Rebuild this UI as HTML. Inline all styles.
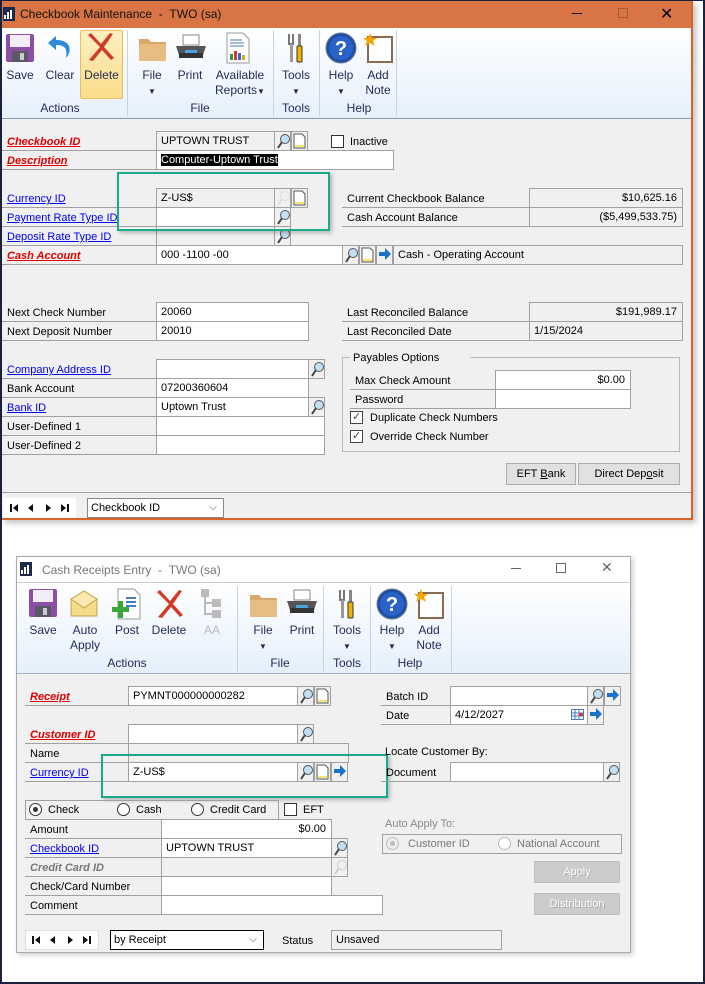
<!DOCTYPE html>
<html><head><meta charset="utf-8">
<style>
*{box-sizing:border-box;margin:0;padding:0}
body{width:705px;height:984px;position:relative;background:#fff;font-family:"Liberation Sans",Arial,sans-serif;font-size:11px;color:#000;overflow:hidden}
.a{position:absolute}
.f{position:absolute;border:1px solid #a0a0a0;background:#fff;height:20px;padding-left:4px;line-height:18px;white-space:nowrap}
.g{background:#f0f0f0}
.r{text-align:right;padding-right:5px}
.l{position:absolute;border-bottom:1px solid #a0a0a0;height:19px;line-height:21px;padding-left:5px;white-space:nowrap}
.lk{color:#0000ee;text-decoration:underline}
.rq{color:#e00000;font-weight:bold;font-style:italic;text-decoration:underline}
.ib{position:absolute;width:17px;height:20px;border:1px solid #a0a0a0;background:#f0f0f0}
.ib svg{position:absolute;left:1px;top:1px}
.rb{position:absolute;text-align:center;color:#1e2a55;font-size:12px;line-height:15px}
.sep{position:absolute;width:1px;background:#c8d3e0}
.btn{position:absolute;border:1px solid #adadad;background:#e1e1e1;text-align:center;line-height:20px}
.cb{position:absolute;width:13px;height:13px;border:1px solid #333;background:#fff}
.rd{position:absolute;width:13px;height:13px;border:1px solid #333;border-radius:50%;background:#fff}
.nav{position:absolute;background:#fff}
</style></head><body>
<div class="a" style="left:0;top:0;width:705px;height:984px;border-left:2px solid #1a2240;border-right:2px solid #1a2240;border-bottom:2px solid #1a2240;border-top:1px solid #1a2240"></div>

<!-- ============ TOP WINDOW ============ -->
<div class="a" style="left:2px;top:1px;width:691px;height:519px;background:#f0f0f0;border-right:2px solid #d9622b;border-bottom:2px solid #d9622b;box-shadow:3px 3px 6px rgba(0,0,0,.25)"></div>
<div class="a" style="left:2px;top:1px;width:689px;height:27px;background:#d97444"></div>
<svg class="a" style="left:3px;top:7px" width="12" height="14"><rect x="0" y="0" width="12" height="14" fill="#1b2a4a"/><path d="M2 12V8M5 12V5M8 12V3" stroke="#fff" stroke-width="2"/></svg>
<div class="a" style="left:20px;top:7px;font-size:12px;color:#111">Checkbook Maintenance&nbsp; - &nbsp;TWO (sa)</div>
<div class="a" style="left:572px;top:13px;width:10px;height:1px;background:#000"></div>
<div class="a" style="left:618px;top:8px;width:10px;height:10px;border:1px solid #a85a35"></div>
<div class="a" style="left:660px;top:4px;font-size:16px;color:#000">✕</div>
<div class="a" style="left:2px;top:28px;width:689px;height:91px;background:linear-gradient(#fff,#e5f0fc);border-bottom:1px solid #8a98a8"></div>
<div class="a" style="left:80px;top:30px;width:43px;height:69px;background:linear-gradient(#fdf0c0,#fbdc8c);border:1px solid #e8c060;border-radius:2px"></div>
<svg class="a" style="left:5px;top:33px" width="30" height="30"><rect x="1" y="1" width="28" height="28" rx="2" fill="#8d4ea6"/><rect x="5" y="2" width="20" height="12" fill="#f2eef7"/><rect x="7" y="18" width="16" height="11" fill="#5a5a66"/><rect x="15" y="20" width="4" height="7" fill="#ccc"/></svg>
<svg class="a" style="left:46px;top:32px" width="28" height="32"><path d="M10 4 L2 11 L10 18 L10 13 C18 13 22 16 20 26 C26 20 26 8 10 8Z" fill="#2d8ad8"/></svg>
<svg class="a" style="left:85px;top:31px" width="30" height="32"><path d="M3 4 L15 16 L4 29 L8 30 L17 19 L26 29 L29 27 L19 16 L28 3 L25 2 L16 13 L6 2Z" fill="#d23a2a"/></svg>
<svg class="a" style="left:138px;top:36px" width="30" height="26"><path d="M1 3h9l3 3h15v19H1z" fill="#d9a96b"/><rect x="1" y="8" width="27" height="17" fill="#e6bd82"/></svg>
<svg class="a" style="left:174px;top:33px" width="34" height="30"><rect x="9" y="2" width="16" height="10" fill="#fff" stroke="#888"/><path d="M2 13h30l-3 9H5z" fill="#555"/><rect x="5" y="20" width="24" height="5" fill="#333"/><rect x="11" y="17" width="12" height="3" fill="#4aa3e0"/></svg>
<svg class="a" style="left:225px;top:32px" width="26" height="32"><path d="M2 1h16l6 6v24H2z" fill="#fff" stroke="#999"/><path d="M5 8h12M5 11h14M5 14h14" stroke="#4a7ac0"/><rect x="5" y="22" width="3" height="6" fill="#2a9a3a"/><rect x="9" y="19" width="3" height="9" fill="#d33"/><rect x="13" y="21" width="3" height="7" fill="#2a6ad0"/><rect x="17" y="23" width="3" height="5" fill="#e8a020"/></svg>
<svg class="a" style="left:285px;top:32px" width="22" height="32"><path d="M4 2v10h4V2" fill="none" stroke="#777" stroke-width="2"/><rect x="5" y="12" width="3" height="18" fill="#999"/><rect x="13" y="2" width="3" height="12" fill="#888"/><rect x="12" y="14" width="5" height="16" rx="1" fill="#f0b400" stroke="#333"/></svg>
<svg class="a" style="left:325px;top:32px" width="32" height="32"><circle cx="16" cy="16" r="15" fill="#1e4fa8" stroke="#6b7a90"/><circle cx="16" cy="16" r="12" fill="#2a62c8"/><text x="16" y="23" font-size="20" font-weight="bold" fill="#fff" text-anchor="middle" font-family="Liberation Sans">?</text></svg>
<svg class="a" style="left:362px;top:32px" width="32" height="32"><rect x="6" y="5" width="24" height="25" fill="#fff" stroke="#8a6a50" stroke-width="2"/><path d="M8 1l2 5 5 0-4 3 2 5-5-3-5 3 2-5-4-3 5 0z" fill="#f5a400"/></svg>
<div class="rb" style="left:2px;top:68px;width:36px">Save</div>
<div class="rb" style="left:42px;top:68px;width:36px">Clear</div>
<div class="rb" style="left:80px;top:68px;width:43px">Delete</div>
<div class="rb" style="left:132px;top:68px;width:40px">File<br><span style="font-size:8px">▼</span></div>
<div class="rb" style="left:172px;top:68px;width:36px">Print</div>
<div class="rb" style="left:211px;top:68px;width:58px">Available<br>Reports<span style="font-size:8px">▼</span></div>
<div class="rb" style="left:276px;top:68px;width:40px">Tools<br><span style="font-size:8px">▼</span></div>
<div class="rb" style="left:323px;top:68px;width:36px">Help<br><span style="font-size:8px">▼</span></div>
<div class="rb" style="left:360px;top:68px;width:36px">Add<br>Note</div>
<div class="rb" style="left:20px;top:101px;width:80px">Actions</div>
<div class="rb" style="left:160px;top:101px;width:80px">File</div>
<div class="rb" style="left:276px;top:101px;width:40px">Tools</div>
<div class="rb" style="left:323px;top:101px;width:72px">Help</div>
<div class="sep" style="left:127px;top:30px;height:86px"></div>
<div class="sep" style="left:273px;top:30px;height:86px"></div>
<div class="sep" style="left:319px;top:30px;height:86px"></div>
<div class="sep" style="left:396px;top:30px;height:86px"></div>

<div class="l rq" style="left:2px;top:132px;width:154px">Checkbook ID</div>
<div class="f g" style="left:156px;top:131px;width:119px">UPTOWN TRUST</div>
<div class="ib" style="left:274px;top:131px"><svg width="15" height="17"><circle cx="9" cy="6" r="4.5" fill="#bfe0f5" stroke="#555"/><line x1="6" y1="9" x2="2" y2="15" stroke="#444" stroke-width="2"/></svg></div>
<div class="ib" style="left:291px;top:131px"><svg width="13" height="16"><path d="M1 1h8l3 3v11H1z" fill="#fff" stroke="#555"/><path d="M2 12h9v2H2z" fill="#f5e36b"/></svg></div>
<div class="cb" style="left:331px;top:135px"></div>
<div class="a" style="left:350px;top:136px">Inactive</div>
<div class="l rq" style="left:2px;top:151px;width:154px">Description</div>
<div class="f" style="left:156px;top:150px;width:238px"><span style="background:#000;color:#fff">Computer-Uptown Trust</span></div>

<div class="l lk" style="left:2px;top:189px;width:154px;color:#0000ee">Currency ID</div>
<div class="f g" style="left:156px;top:188px;width:119px">Z-US$</div>
<div class="ib" style="left:274px;top:188px"><svg width="15" height="17"><circle cx="9" cy="6" r="4.5" fill="none" stroke="#ddd"/><line x1="6" y1="9" x2="2" y2="15" stroke="#ddd" stroke-width="2"/></svg></div>
<div class="ib" style="left:291px;top:188px"><svg width="13" height="16"><path d="M1 1h8l3 3v11H1z" fill="#fff" stroke="#555"/><path d="M2 12h9v2H2z" fill="#f5e36b"/></svg></div>
<div class="l lk" style="left:2px;top:208px;width:154px">Payment Rate Type ID</div>
<div class="f" style="left:156px;top:207px;width:119px"></div>
<div class="ib" style="left:274px;top:207px"><svg width="15" height="17"><circle cx="9" cy="6" r="4.5" fill="#bfe0f5" stroke="#555"/><line x1="6" y1="9" x2="2" y2="15" stroke="#444" stroke-width="2"/></svg></div>
<div class="l lk" style="left:2px;top:227px;width:154px">Deposit Rate Type ID</div>
<div class="f g" style="left:156px;top:226px;width:119px"></div>
<div class="ib" style="left:274px;top:226px"><svg width="15" height="17"><circle cx="9" cy="6" r="4.5" fill="#bfe0f5" stroke="#555"/><line x1="6" y1="9" x2="2" y2="15" stroke="#444" stroke-width="2"/></svg></div>
<div class="l rq" style="left:2px;top:246px;width:154px">Cash Account</div>
<div class="f" style="left:156px;top:245px;width:187px">000 -1100 -00</div>
<div class="ib" style="left:342px;top:245px"><svg width="15" height="17"><circle cx="9" cy="6" r="4.5" fill="#bfe0f5" stroke="#555"/><line x1="6" y1="9" x2="2" y2="15" stroke="#444" stroke-width="2"/></svg></div>
<div class="ib" style="left:359px;top:245px"><svg width="13" height="16"><path d="M1 1h8l3 3v11H1z" fill="#fff" stroke="#555"/><path d="M2 12h9v2H2z" fill="#f5e36b"/></svg></div>
<div class="ib" style="left:376px;top:245px"><svg width="14" height="14"><path d="M1 5h6V1l6 6-6 6V9H1z" fill="#1a73c8"/></svg></div>
<div class="f g" style="left:393px;top:245px;width:290px">Cash - Operating Account</div>

<div class="l" style="left:342px;top:189px;width:188px">Current Checkbook Balance</div>
<div class="f g r" style="left:529px;top:188px;width:154px">$10,625.16</div>
<div class="l" style="left:342px;top:208px;width:188px">Cash Account Balance</div>
<div class="f g r" style="left:529px;top:207px;width:154px">($5,499,533.75)</div>

<div class="a" style="left:117px;top:172px;width:213px;height:59px;border:2px solid #1aa98a;box-shadow:2px 2px 4px rgba(0,0,0,.25)"></div>

<div class="l" style="left:2px;top:303px;width:154px">Next Check Number</div>
<div class="f" style="left:156px;top:302px;width:153px">20060</div>
<div class="l" style="left:2px;top:322px;width:154px">Next Deposit Number</div>
<div class="f" style="left:156px;top:321px;width:153px">20010</div>
<div class="l" style="left:342px;top:303px;width:188px">Last Reconciled Balance</div>
<div class="f g r" style="left:529px;top:302px;width:154px">$191,989.17</div>
<div class="l" style="left:342px;top:322px;width:188px">Last Reconciled Date</div>
<div class="f g" style="left:529px;top:321px;width:154px">1/15/2024</div>

<div class="l lk" style="left:2px;top:360px;width:154px">Company Address ID</div>
<div class="f" style="left:156px;top:359px;width:153px"></div>
<div class="ib" style="left:308px;top:359px"><svg width="15" height="17"><circle cx="9" cy="6" r="4.5" fill="#bfe0f5" stroke="#555"/><line x1="6" y1="9" x2="2" y2="15" stroke="#444" stroke-width="2"/></svg></div>
<div class="l" style="left:2px;top:379px;width:154px">Bank Account</div>
<div class="f" style="left:156px;top:378px;width:153px">07200360604</div>
<div class="l lk" style="left:2px;top:398px;width:154px">Bank ID</div>
<div class="f" style="left:156px;top:397px;width:153px">Uptown Trust</div>
<div class="ib" style="left:308px;top:397px"><svg width="15" height="17"><circle cx="9" cy="6" r="4.5" fill="#bfe0f5" stroke="#555"/><line x1="6" y1="9" x2="2" y2="15" stroke="#444" stroke-width="2"/></svg></div>
<div class="l" style="left:2px;top:417px;width:154px">User-Defined 1</div>
<div class="f" style="left:156px;top:416px;width:169px"></div>
<div class="l" style="left:2px;top:436px;width:154px">User-Defined 2</div>
<div class="f" style="left:156px;top:435px;width:169px"></div>

<div class="a" style="left:342px;top:357px;width:338px;height:95px;border:1px solid #b8b8b8"></div>
<div class="a" style="left:350px;top:352px;background:#f0f0f0;padding:0 3px;width:120px">Payables Options</div>
<div class="l" style="left:350px;top:371px;width:146px">Max Check Amount</div>
<div class="f r" style="left:495px;top:370px;width:136px">$0.00</div>
<div class="l" style="left:350px;top:390px;width:146px">Password</div>
<div class="f" style="left:495px;top:389px;width:136px"></div>
<div class="cb" style="left:350px;top:411px;border-color:#444"><span style="position:absolute;left:1px;top:-2px;font-size:11px;color:#444">✓</span></div>
<div class="a" style="left:370px;top:412px">Duplicate Check Numbers</div>
<div class="cb" style="left:350px;top:430px;border-color:#444"><span style="position:absolute;left:1px;top:-2px;font-size:11px;color:#444">✓</span></div>
<div class="a" style="left:370px;top:431px">Override Check Number</div>
<div class="btn" style="left:506px;top:463px;width:70px;height:22px">EFT <u>B</u>ank</div>
<div class="btn" style="left:578px;top:463px;width:102px;height:22px">Direct Dep<u>o</u>sit</div>

<div class="a" style="left:2px;top:492px;width:689px;height:1px;background:#a0a0a0"></div>
<svg class="nav" style="left:3px;top:498px" width="73" height="20"><rect width="73" height="20" fill="#fff"/><g fill="#111"><rect x="7" y="6" width="2" height="8"/><path d="M15 6v8l-5-4z"/><path d="M30 6v8l-5-4z"/><path d="M43 6v8l5-4z"/><path d="M58 6v8l5-4z"/><rect x="64" y="6" width="2" height="8"/></g></svg>
<div class="a" style="left:87px;top:498px;width:137px;height:20px;border:1px solid #888;background:#fff;padding-left:3px;line-height:18px">Checkbook ID<span style="position:absolute;right:6px;top:0;font-size:10px;color:#555">⌵</span></div>

<!-- ============ SECOND WINDOW ============ -->
<div class="a" style="left:16px;top:556px;width:615px;height:397px;background:#f0f0f0;border:1px solid #aaa;box-shadow:2px 2px 5px rgba(0,0,0,.2)"></div>
<div class="a" style="left:17px;top:557px;width:613px;height:26px;background:#fff;border-bottom:1px solid #ccc"></div>
<svg class="a" style="left:20px;top:562px" width="12" height="14"><rect x="0" y="0" width="12" height="14" fill="#1b2a4a"/><path d="M2 12V8M5 12V5M8 12V3" stroke="#fff" stroke-width="2"/></svg>
<div class="a" style="left:42px;top:563px;font-size:12px;color:#777">Cash Receipts Entry&nbsp; - &nbsp;TWO (sa)</div>
<div class="a" style="left:511px;top:568px;width:10px;height:1px;background:#666"></div>
<div class="a" style="left:556px;top:563px;width:10px;height:10px;border:1px solid #666"></div>
<div class="a" style="left:601px;top:559px;font-size:14px;color:#666">✕</div>
<div class="a" style="left:17px;top:583px;width:613px;height:91px;background:linear-gradient(#fff,#e5f0fc);border-bottom:1px solid #a9b3c0"></div>
<svg class="a" style="left:28px;top:588px" width="30" height="30"><rect x="1" y="1" width="28" height="28" rx="2" fill="#8d4ea6"/><rect x="5" y="2" width="20" height="12" fill="#f2eef7"/><rect x="7" y="18" width="16" height="11" fill="#5a5a66"/><rect x="15" y="20" width="4" height="7" fill="#ccc"/></svg>
<svg class="a" style="left:69px;top:590px" width="30" height="28"><rect x="2" y="9" width="26" height="17" fill="#f5dc8a" stroke="#c9a24a"/><path d="M2 9L15 1L28 9L15 18Z" fill="#fbe9b0" stroke="#c9a24a"/></svg>
<svg class="a" style="left:112px;top:588px" width="30" height="32"><path d="M6 1h16l6 6v24H6z" fill="#fff" stroke="#999"/><path d="M14 10h10M14 14h10M14 18h10" stroke="#4a7ac0" stroke-width="2"/><path d="M6 13h5v6h6v5h-6v6H6v-6H0v-5h6z" fill="#3aa83a"/></svg>
<svg class="a" style="left:154px;top:588px" width="30" height="32"><path d="M3 4 L15 16 L4 29 L8 30 L17 19 L26 29 L29 27 L19 16 L28 3 L25 2 L16 13 L6 2Z" fill="#d23a2a"/></svg>
<svg class="a" style="left:200px;top:588px" width="24" height="32"><rect x="1" y="1" width="8" height="8" fill="#bbb"/><rect x="12" y="11" width="9" height="8" fill="#bbb"/><rect x="12" y="22" width="9" height="8" fill="#bbb"/><path d="M5 9v17h7M5 15h7" stroke="#bbb" stroke-width="2" fill="none"/></svg>
<svg class="a" style="left:249px;top:592px" width="30" height="26"><path d="M1 3h9l3 3h15v19H1z" fill="#d9a96b"/><rect x="1" y="8" width="27" height="17" fill="#e6bd82"/></svg>
<svg class="a" style="left:285px;top:588px" width="34" height="30"><rect x="9" y="2" width="16" height="10" fill="#fff" stroke="#888"/><path d="M2 13h30l-3 9H5z" fill="#555"/><rect x="5" y="20" width="24" height="5" fill="#333"/><rect x="11" y="17" width="12" height="3" fill="#4aa3e0"/></svg>
<svg class="a" style="left:336px;top:588px" width="22" height="32"><path d="M4 2v10h4V2" fill="none" stroke="#777" stroke-width="2"/><rect x="5" y="12" width="3" height="18" fill="#999"/><rect x="13" y="2" width="3" height="12" fill="#888"/><rect x="12" y="14" width="5" height="16" rx="1" fill="#f0b400" stroke="#333"/></svg>
<svg class="a" style="left:376px;top:588px" width="32" height="32"><circle cx="16" cy="16" r="15" fill="#1e4fa8" stroke="#6b7a90"/><circle cx="16" cy="16" r="12" fill="#2a62c8"/><text x="16" y="23" font-size="20" font-weight="bold" fill="#fff" text-anchor="middle" font-family="Liberation Sans">?</text></svg>
<svg class="a" style="left:413px;top:588px" width="32" height="32"><rect x="6" y="5" width="24" height="25" fill="#fff" stroke="#8a6a50" stroke-width="2"/><path d="M8 1l2 5 5 0-4 3 2 5-5-3-5 3 2-5-4-3 5 0z" fill="#f5a400"/></svg>
<div class="rb" style="left:25px;top:623px;width:36px">Save</div>
<div class="rb" style="left:67px;top:623px;width:36px">Auto<br>Apply</div>
<div class="rb" style="left:109px;top:623px;width:36px">Post</div>
<div class="rb" style="left:148px;top:623px;width:42px">Delete</div>
<div class="rb" style="left:196px;top:623px;width:32px;color:#bbb">AA</div>
<div class="rb" style="left:245px;top:623px;width:36px">File<br><span style="font-size:8px">▼</span></div>
<div class="rb" style="left:284px;top:623px;width:36px">Print</div>
<div class="rb" style="left:329px;top:623px;width:36px">Tools<br><span style="font-size:8px">▼</span></div>
<div class="rb" style="left:374px;top:623px;width:36px">Help<br><span style="font-size:8px">▼</span></div>
<div class="rb" style="left:411px;top:623px;width:36px">Add<br>Note</div>
<div class="rb" style="left:87px;top:656px;width:80px">Actions</div>
<div class="rb" style="left:260px;top:656px;width:40px">File</div>
<div class="rb" style="left:329px;top:656px;width:36px">Tools</div>
<div class="rb" style="left:390px;top:656px;width:40px">Help</div>
<div class="sep" style="left:237px;top:586px;height:86px"></div>
<div class="sep" style="left:323px;top:586px;height:86px"></div>
<div class="sep" style="left:370px;top:586px;height:86px"></div>
<div class="sep" style="left:451px;top:586px;height:86px"></div>

<div class="l rq" style="left:25px;top:687px;width:103px">Receipt</div>
<div class="f" style="left:128px;top:686px;width:170px">PYMNT000000000282</div>
<div class="ib" style="left:297px;top:686px"><svg width="15" height="17"><circle cx="9" cy="6" r="4.5" fill="#bfe0f5" stroke="#555"/><line x1="6" y1="9" x2="2" y2="15" stroke="#444" stroke-width="2"/></svg></div>
<div class="ib" style="left:314px;top:686px"><svg width="13" height="16"><path d="M1 1h8l3 3v11H1z" fill="#fff" stroke="#555"/><path d="M2 12h9v2H2z" fill="#f5e36b"/></svg></div>
<div class="l rq" style="left:25px;top:725px;width:103px">Customer ID</div>
<div class="f" style="left:128px;top:724px;width:170px"></div>
<div class="ib" style="left:297px;top:724px"><svg width="15" height="17"><circle cx="9" cy="6" r="4.5" fill="#bfe0f5" stroke="#555"/><line x1="6" y1="9" x2="2" y2="15" stroke="#444" stroke-width="2"/></svg></div>
<div class="l" style="left:25px;top:744px;width:103px">Name</div>
<div class="f g" style="left:128px;top:743px;width:221px"></div>
<div class="l lk" style="left:25px;top:763px;width:103px">Currency ID</div>
<div class="f" style="left:128px;top:762px;width:170px">Z-US$</div>
<div class="ib" style="left:297px;top:762px"><svg width="15" height="17"><circle cx="9" cy="6" r="4.5" fill="#bfe0f5" stroke="#555"/><line x1="6" y1="9" x2="2" y2="15" stroke="#444" stroke-width="2"/></svg></div>
<div class="ib" style="left:314px;top:762px"><svg width="13" height="16"><path d="M1 1h8l3 3v11H1z" fill="#fff" stroke="#555"/><path d="M2 12h9v2H2z" fill="#f5e36b"/></svg></div>
<div class="ib" style="left:331px;top:762px;width:17px"><svg width="14" height="14"><path d="M1 5h6V1l6 6-6 6V9H1z" fill="#1a73c8"/></svg></div>

<div class="a" style="left:101px;top:754px;width:287px;height:44px;border:2px solid #1aa98a;box-shadow:2px 2px 4px rgba(0,0,0,.25)"></div>

<div class="l" style="left:381px;top:687px;width:70px">Batch ID</div>
<div class="f" style="left:450px;top:686px;width:138px"></div>
<div class="ib" style="left:587px;top:686px"><svg width="15" height="17"><circle cx="9" cy="6" r="4.5" fill="#bfe0f5" stroke="#555"/><line x1="6" y1="9" x2="2" y2="15" stroke="#444" stroke-width="2"/></svg></div>
<div class="ib" style="left:604px;top:686px"><svg width="14" height="14"><path d="M1 5h6V1l6 6-6 6V9H1z" fill="#1a73c8"/></svg></div>
<div class="l" style="left:381px;top:706px;width:70px">Date</div>
<div class="f" style="left:450px;top:705px;width:138px">4/12/2027<svg style="position:absolute;right:3px;top:3px" width="13" height="11"><rect x="0.5" y="0.5" width="12" height="10" fill="#fff" stroke="#4a7ac0"/><path d="M0 4h13M0 7h13M4 0v11M8 0v11" stroke="#4a7ac0"/><rect x="8" y="4" width="4" height="3" fill="#d33"/></svg></div>
<div class="ib" style="left:587px;top:705px"><svg width="14" height="14"><path d="M1 5h6V1l6 6-6 6V9H1z" fill="#1a73c8"/></svg></div>
<div class="a" style="left:385px;top:746px">Locate Customer By:</div>
<div class="l" style="left:381px;top:763px;width:70px">Document</div>
<div class="f" style="left:450px;top:762px;width:154px"></div>
<div class="ib" style="left:603px;top:762px"><svg width="15" height="17"><circle cx="9" cy="6" r="4.5" fill="#bfe0f5" stroke="#555"/><line x1="6" y1="9" x2="2" y2="15" stroke="#444" stroke-width="2"/></svg></div>

<div class="a" style="left:25px;top:800px;width:254px;height:20px;border:1px solid #a0a0a0"></div>
<div class="rd" style="left:29px;top:803px"><span style="position:absolute;left:3px;top:3px;width:5px;height:5px;border-radius:50%;background:#333"></span></div>
<div class="a" style="left:48px;top:804px">Check</div>
<div class="rd" style="left:117px;top:803px"></div>
<div class="a" style="left:136px;top:804px">Cash</div>
<div class="rd" style="left:191px;top:803px"></div>
<div class="a" style="left:210px;top:804px">Credit Card</div>
<div class="cb" style="left:284px;top:803px"></div>
<div class="a" style="left:303px;top:804px">EFT</div>

<div class="l" style="left:25px;top:820px;width:137px">Amount</div>
<div class="f r" style="left:161px;top:819px;width:171px">$0.00</div>
<div class="l lk" style="left:25px;top:839px;width:137px">Checkbook ID</div>
<div class="f" style="left:161px;top:838px;width:171px">UPTOWN TRUST</div>
<div class="ib" style="left:331px;top:838px"><svg width="15" height="17"><circle cx="9" cy="6" r="4.5" fill="#bfe0f5" stroke="#555"/><line x1="6" y1="9" x2="2" y2="15" stroke="#444" stroke-width="2"/></svg></div>
<div class="l" style="left:25px;top:858px;width:137px;color:#777;font-weight:bold;font-style:italic">Credit Card ID</div>
<div class="f g" style="left:161px;top:857px;width:171px"></div>
<div class="ib" style="left:331px;top:857px"><svg width="15" height="17"><circle cx="9" cy="6" r="4.5" fill="none" stroke="#ccc"/><line x1="6" y1="9" x2="2" y2="15" stroke="#ccc" stroke-width="2"/></svg></div>
<div class="l" style="left:25px;top:877px;width:137px">Check/Card Number</div>
<div class="f" style="left:161px;top:876px;width:171px"></div>
<div class="l" style="left:25px;top:896px;width:137px">Comment</div>
<div class="f" style="left:161px;top:895px;width:222px"></div>

<div class="a" style="left:385px;top:818px;color:#888">Auto Apply To:</div>
<div class="a" style="left:382px;top:834px;width:240px;height:20px;border:1px solid #a0a0a0"></div>
<div class="rd" style="left:386px;top:837px;border-color:#bbb;background:#eee"><span style="position:absolute;left:3px;top:3px;width:5px;height:5px;border-radius:50%;background:#bbb"></span></div>
<div class="a" style="left:408px;top:838px;color:#777">Customer ID</div>
<div class="rd" style="left:498px;top:837px;border-color:#bbb"></div>
<div class="a" style="left:517px;top:838px;color:#777">National Account</div>
<div class="btn" style="left:534px;top:861px;width:86px;height:22px;background:#ccc;border-color:#bfbfbf;color:#fff;text-shadow:1px 1px 0 #aaa">Apply</div>
<div class="btn" style="left:534px;top:893px;width:86px;height:22px;background:#ccc;border-color:#bfbfbf;color:#fff;text-shadow:1px 1px 0 #aaa">Distribution</div>

<svg class="nav" style="left:25px;top:930px" width="74" height="20"><rect x="0.5" y="0.5" width="73" height="19" fill="#fff" stroke="#ddd"/><g fill="#111"><rect x="7" y="6" width="2" height="8"/><path d="M15 6v8l-5-4z"/><path d="M30 6v8l-5-4z"/><path d="M43 6v8l5-4z"/><path d="M58 6v8l5-4z"/><rect x="64" y="6" width="2" height="8"/></g></svg>
<div class="a" style="left:110px;top:930px;width:154px;height:20px;border:1px solid #000;background:#fff;padding-left:3px;line-height:18px">by Receipt<span style="position:absolute;right:6px;top:0;font-size:10px;color:#555">⌵</span></div>
<div class="a" style="left:282px;top:935px">Status</div>
<div class="f g" style="left:331px;top:930px;width:171px">Unsaved</div>
</body></html>
